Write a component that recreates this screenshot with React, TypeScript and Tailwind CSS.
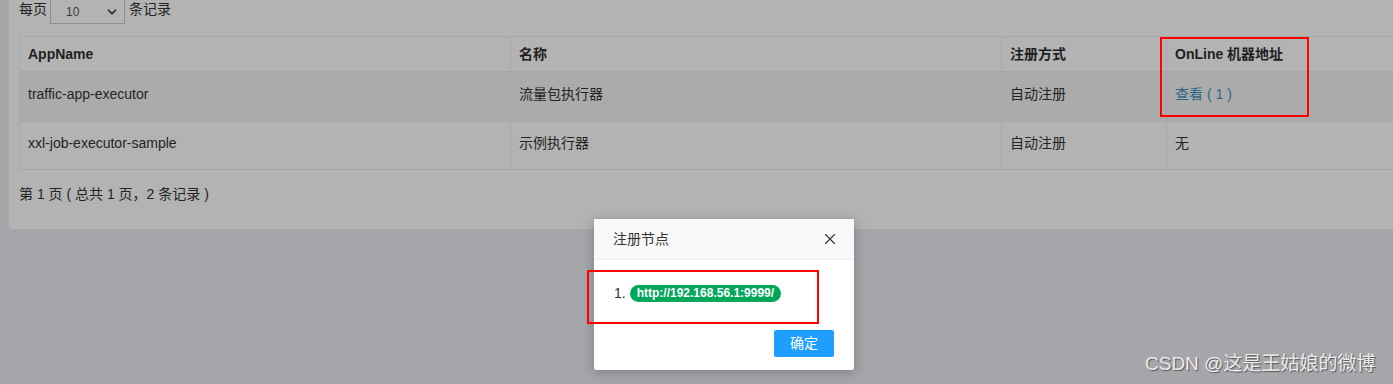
import { X, ChevronDown } from 'lucide-react';

const font = { fontFamily: '"Liberation Sans", "Noto Sans CJK SC", sans-serif' };

interface Row {
  appName: string;
  title: string;
  addressType: string;
  online: number;
}

const rows: Row[] = [
  { appName: 'traffic-app-executor', title: '流量包执行器', addressType: '自动注册', online: 1 },
  { appName: 'xxl-job-executor-sample', title: '示例执行器', addressType: '自动注册', online: 0 },
];

export default function App() {
  return (
    <div
      className="relative w-full h-[384px] overflow-hidden bg-[#a5a6aa] text-[14px] text-[#242424]"
      style={font}
    >
      {/* 列表卡片 */}
      <div className="ml-[9px] -mt-[6px] w-[1420px] h-[235px] bg-[#b3b3b3] rounded-b-[3px] pl-[10px]">
        <div className="flex items-center h-[30px]">
          <span>每页</span>
          <div className="ml-[3px] w-[75px] h-[30px] border border-[#8f8f8f] flex items-center justify-between pl-[15px] pr-[5px] pt-[6px]">
            <span className="text-[12px] text-[#3a3a3a]">10</span>
            <ChevronDown size={14} strokeWidth={3} className="text-[#2a2a2a]" />
          </div>
          <span className="ml-[4px]">条记录</span>
        </div>

        <div className="mt-[12px] border border-[#a8a8a8] border-b-[#a5a5a5]">
          <div className="flex h-[36px] border-b-2 border-[#a7a7a7] font-bold text-[#1f1f1f]">
            <div className="w-[491px] px-[8px] flex items-center border-r border-[#a8a8a8]">AppName</div>
            <div className="w-[491px] px-[8px] flex items-center border-r border-[#a8a8a8]">名称</div>
            <div className="w-[165px] px-[8px] flex items-center border-r border-[#a8a8a8]">注册方式</div>
            <div className="flex-1 px-[8px] flex items-center">OnLine 机器地址</div>
          </div>
          {rows.map((row, i) => (
            <div
              key={row.appName}
              className={
                i === 0
                  ? 'flex h-[49px] border-b border-[#a8a8a8] bg-[#ababab]'
                  : 'flex h-[47px]'
              }
            >
              <div className="w-[491px] px-[8px] pt-[11px] border-r border-[#a8a8a8]">{row.appName}</div>
              <div className="w-[491px] px-[8px] pt-[11px] border-r border-[#a8a8a8]">{row.title}</div>
              <div className="w-[165px] px-[8px] pt-[11px] border-r border-[#a8a8a8]">{row.addressType}</div>
              <div className="flex-1 px-[8px] pt-[11px]">
                {row.online > 0 ? (
                  <span className="text-[#2e6688]">查看 ( {row.online} )</span>
                ) : (
                  <span>无</span>
                )}
              </div>
            </div>
          ))}
        </div>

        <div className="mt-[14px]">第 1 页 ( 总共 1 页，2 条记录 )</div>
      </div>

      {/* 标注框 */}
      <div className="absolute left-[1160px] top-[37px] w-[149px] h-[80px] border-2 border-[#ff0000]" />

      {/* 弹窗 */}
      <div className="absolute left-[594px] top-[219px] w-[260px] h-[151px] bg-white rounded-[2px] shadow-[0_2px_12px_rgba(0,0,0,0.25)] flex flex-col">
        <div className="h-[41px] bg-[#f8f8f8] border-b border-[#eeeeee] flex items-center justify-between pl-[19px] pr-[15px]">
          <span className="text-[14px] text-[#333]">注册节点</span>
          <X size={18} strokeWidth={1.5} className="text-[#333]" />
        </div>
        <div className="flex items-center pl-[20px] mt-[24px] h-[18px]">
          <span className="text-[#333] mr-[4px]">1.</span>
          <span className="bg-[#00a65a] text-white font-bold text-[12px] rounded-full px-[7px] h-[17px] leading-[17px]">
            http://192.168.56.1:9999/
          </span>
        </div>
        <div className="flex justify-end pr-[20px] mt-[28px]">
          <button className="w-[60px] h-[27px] bg-[#1e9fff] text-white text-[14px] rounded-[2px]">确定</button>
        </div>
      </div>

      <div className="absolute left-[587px] top-[270px] w-[232px] h-[54px] border-2 border-[#ff0000]" />

      <div className="absolute left-[1145px] top-[350px] text-[19px] text-white/85 [text-shadow:1px_1px_1px_rgba(0,0,0,0.5)]">
        CSDN @这是王姑娘的微博
      </div>
    </div>
  );
}
